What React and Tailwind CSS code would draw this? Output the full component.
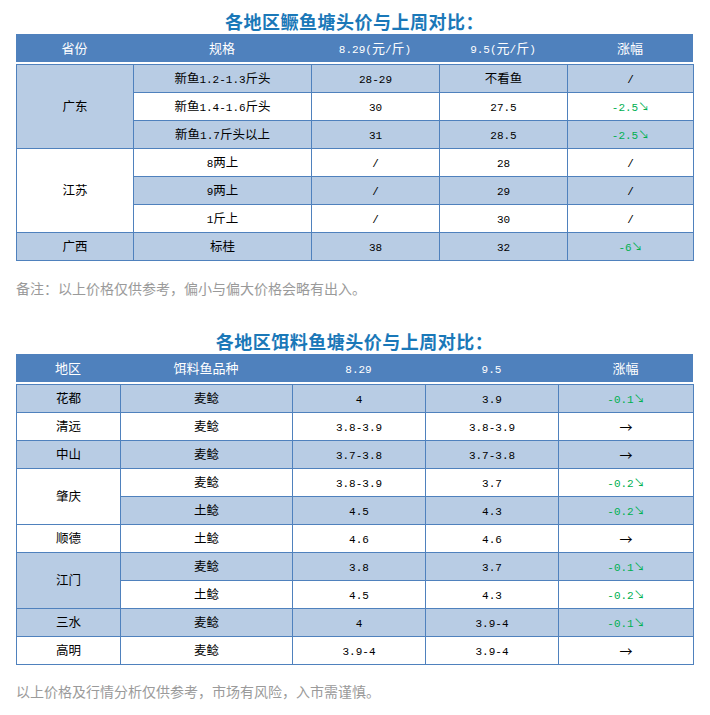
import React from "react";

const FONT = { fontFamily: '"Noto Sans CJK SC", "Liberation Sans", sans-serif' };

// split ascii runs into monospace spans so numbers look like the bitmap font
function Txt({ s, className = "" }) {
  const parts = String(s).split(/([ -~]+)/);
  return (
    <span className={className}>
      {parts.map((p, i) =>
        i % 2 === 1 ? (
          <span key={i} className="font-['Liberation_Mono',monospace] text-[11px]">
            {p}
          </span>
        ) : (
          <span key={i}>{p}</span>
        )
      )}
    </span>
  );
}

function Change({ v }) {
  if (v === "/") return <Txt s="/" />;
  if (v === "→") return <span className="text-black text-[13px]">→</span>;
  return (
    <span className="text-[#00b050]">
      <Txt s={v} />
      <span className="text-[11px]">↘</span>
    </span>
  );
}

const cell = "border border-[#4f81bd] h-[28px] p-0 text-center align-middle text-[12.5px] text-black font-normal";
const blue = "bg-[#b8cce4]";

function Title({ children }) {
  return (
    <div className="h-[26px] leading-[26px] text-center text-[18px] font-bold text-[#1a78b8] tracking-[0.5px]">
      {children}
    </div>
  );
}

function Head({ widths, cols }) {
  return (
    <table className="w-full table-fixed border-collapse">
      <colgroup>
        {widths.map((w, i) => (
          <col key={i} style={{ width: w }} />
        ))}
      </colgroup>
      <thead>
        <tr className="bg-[#4f81bd]">
          {cols.map((c, i) => (
            <th key={i} className="h-[28px] p-0 text-center align-middle text-[13px] font-normal text-white">
              <Txt s={c} />
            </th>
          ))}
        </tr>
      </thead>
    </table>
  );
}

const t1 = [
  { region: "广东", span: 3, rb: true, spec: "新鱼1.2-1.3斤头", a: "28-29", b: "不看鱼", c: "/", bg: true },
  { spec: "新鱼1.4-1.6斤头", a: "30", b: "27.5", c: "-2.5", bg: false },
  { spec: "新鱼1.7斤头以上", a: "31", b: "28.5", c: "-2.5", bg: true },
  { region: "江苏", span: 3, rb: false, spec: "8两上", a: "/", b: "28", c: "/", bg: false },
  { spec: "9两上", a: "/", b: "29", c: "/", bg: true },
  { spec: "1斤上", a: "/", b: "30", c: "/", bg: false },
  { region: "广西", span: 1, rb: true, spec: "标桂", a: "38", b: "32", c: "-6", bg: true },
];

const t2 = [
  { region: "花都", span: 1, rb: true, spec: "麦鲶", a: "4", b: "3.9", c: "-0.1", bg: true },
  { region: "清远", span: 1, rb: false, spec: "麦鲶", a: "3.8-3.9", b: "3.8-3.9", c: "→", bg: false },
  { region: "中山", span: 1, rb: true, spec: "麦鲶", a: "3.7-3.8", b: "3.7-3.8", c: "→", bg: true },
  { region: "肇庆", span: 2, rb: false, spec: "麦鲶", a: "3.8-3.9", b: "3.7", c: "-0.2", bg: false },
  { spec: "土鲶", a: "4.5", b: "4.3", c: "-0.2", bg: true },
  { region: "顺德", span: 1, rb: false, spec: "土鲶", a: "4.6", b: "4.6", c: "→", bg: false },
  { region: "江门", span: 2, rb: true, spec: "麦鲶", a: "3.8", b: "3.7", c: "-0.1", bg: true },
  { spec: "土鲶", a: "4.5", b: "4.3", c: "-0.2", bg: false },
  { region: "三水", span: 1, rb: true, spec: "麦鲶", a: "4", b: "3.9-4", c: "-0.1", bg: true },
  { region: "高明", span: 1, rb: false, spec: "麦鲶", a: "3.9-4", b: "3.9-4", c: "→", bg: false },
];

function Body({ widths, rows }) {
  return (
    <table className="w-full table-fixed border-collapse mt-[2px]">
      <colgroup>
        {widths.map((w, i) => (
          <col key={i} style={{ width: w }} />
        ))}
      </colgroup>
      <tbody>
        {rows.map((r, i) => (
          <tr key={i}>
            {r.region && (
              <td rowSpan={r.span} className={`${cell} ${r.rb ? blue : "bg-white"}`}>
                <Txt s={r.region} />
              </td>
            )}
            <td className={`${cell} ${r.bg ? blue : "bg-white"}`}>
              <Txt s={r.spec} />
            </td>
            <td className={`${cell} ${r.bg ? blue : "bg-white"}`}>
              <Txt s={r.a} />
            </td>
            <td className={`${cell} ${r.bg ? blue : "bg-white"}`}>
              <Txt s={r.b} />
            </td>
            <td className={`${cell} ${r.bg ? blue : "bg-white"}`}>
              <Change v={r.c} />
            </td>
          </tr>
        ))}
      </tbody>
    </table>
  );
}

export default function App() {
  const w1 = [117, 178, 128, 128, 126];
  const w2 = [104, 172, 133, 133, 135];
  return (
    <div className="w-[710px] min-h-[715px] bg-white pl-[16px]" style={FONT}>
      <div className="w-[677px]">
        <div className="pt-[8px]">
          <Title>各地区鳜鱼塘头价与上周对比：</Title>
        </div>
        <Head widths={w1} cols={["省份", "规格", "8.29(元/斤)", "9.5(元/斤)", "涨幅"]} />
        <Body widths={w1} rows={t1} />
        <div className="h-[67px] pt-[17px] leading-[20px] text-[14px] text-[#9a9a9a]">
          备注：以上价格仅供参考，偏小与偏大价格会略有出入。
        </div>
        <Title>各地区饵料鱼塘头价与上周对比：</Title>
        <Head widths={w2} cols={["地区", "饵料鱼品种", "8.29", "9.5", "涨幅"]} />
        <Body widths={w2} rows={t2} />
        <div className="pt-[16px] leading-[20px] text-[14px] text-[#9a9a9a]">
          以上价格及行情分析仅供参考，市场有风险，入市需谨慎。
        </div>
      </div>
    </div>
  );
}
